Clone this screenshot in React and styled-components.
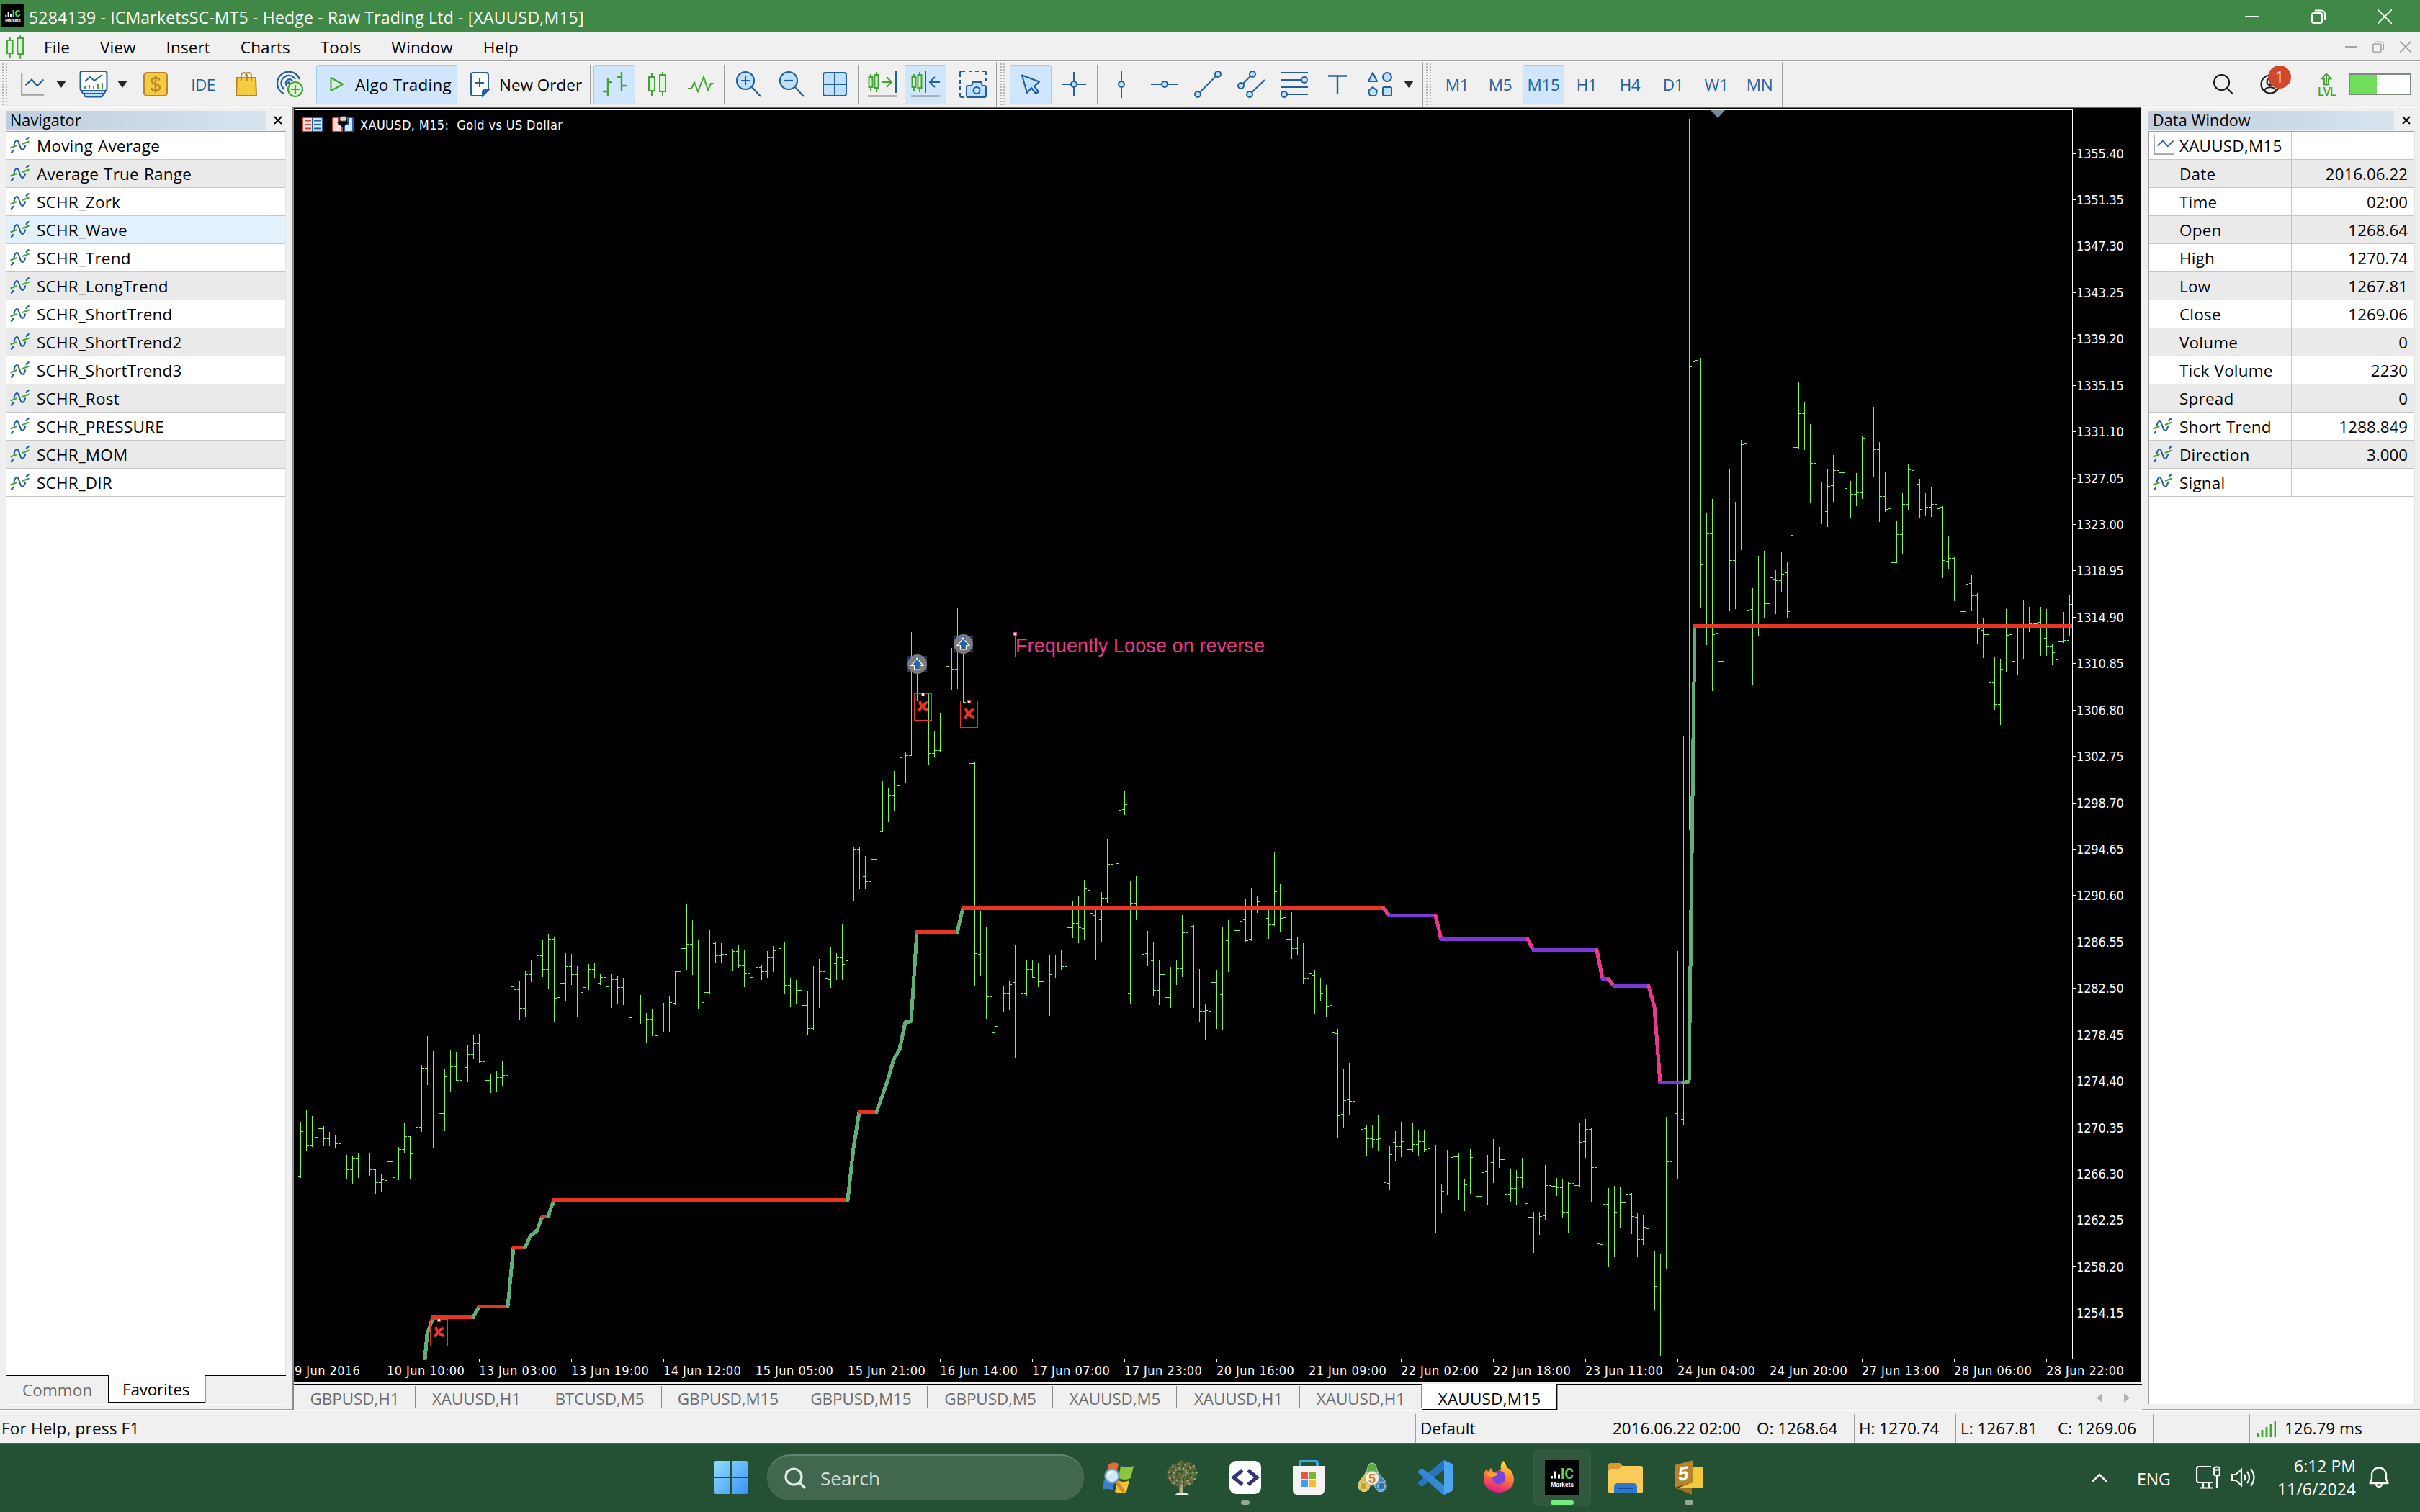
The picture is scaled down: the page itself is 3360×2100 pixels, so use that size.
import React from "react";
import styled, { createGlobalStyle, css } from "styled-components";

const UI = `"Open Sans", "Noto Sans", sans-serif`;
const CHART = `"DejaVu Sans Condensed", "DejaVu Sans", sans-serif`;
const BLUE = "#225f9c";
const SKY = "#bfe1fb";
const GREEN = "#44a336";
const MINT = "#daf6d4";

const GlobalStyle = createGlobalStyle`
  * { box-sizing: border-box; }
  body { margin: 0; background: #f0f0f0; }
`;

/* ---------- window frame ---------- */
const Desktop = styled.div`
  width: 3360px;
  height: 2100px;
  overflow: hidden;
  display: flex;
  flex-direction: column;
  background: #f0f0f0;
  color: #000;
  font-family: ${UI};
  font-size: 22.5px;
  letter-spacing: 0.1px;
  line-height: 30px;
  white-space: pre;
`;
const TitleBar = styled.header`
  height: 45px;
  flex: none;
  display: flex;
  align-items: center;
  padding: 0 39px 0 2px;
  background: #3f8846;
  color: #fff;
`;
const AppBadge = styled.svg`
  width: 32px;
  height: 32px;
  margin-top: -1px;
`;
const TitleText = styled.span`
  margin-left: 6px;
  padding-top: 2px;
  font-size: 23px;
  letter-spacing: 0.18px;
`;
const Push = styled.div`
  flex: 1;
`;
const WindowButtons = styled.div`
  display: flex;
  align-items: center;
  gap: ${(p) => p.$gap}px;
`;
const MenuBar = styled.nav`
  height: 41px;
  flex: none;
  display: flex;
  align-items: center;
  padding: 0 12px 0 9px;
  border-bottom: 1px solid #fff;
  box-shadow: inset 0 -1px 0 #a0a0a0;
`;
const MenuItems = styled.div`
  display: flex;
  gap: 42px;
  margin-left: 27px;
  padding-top: 1px;
`;

/* ---------- toolbar ---------- */
const Toolbar = styled.div`
  height: 63px;
  flex: none;
  display: flex;
  align-items: center;
  padding: 0 12px 0 0;
  border-bottom: 1px solid #a0a0a0;
`;
const Grip = styled.div`
  width: 8px;
  height: 60px;
  margin-left: ${(p) => p.$ml}px;
  background-image: radial-gradient(circle, #b4b4b4 1.1px, transparent 1.4px);
  background-size: 5px 4px;
`;
const Divider = styled.div`
  width: 1px;
  height: ${(p) => (p.$full ? 62 : 54)}px;
  margin-left: ${(p) => p.$ml}px;
  background: #a0a0a0;
`;
const Tool = styled.div`
  flex: none;
  display: flex;
  align-items: center;
  justify-content: ${(p) => (p.$start ? "flex-start" : "center")};
  width: ${(p) => p.$w}px;
  height: 55px;
  margin-left: ${(p) => p.$ml}px;
  padding-left: ${(p) => p.$start || 0}px;
  ${(p) =>
    p.$active &&
    css`
      background: #d0e6fd;
      border: 1px solid #99cdfb;
      border-radius: 3px;
    `}
  svg { flex: none; overflow: visible; }
`;
const ToolText = styled.span`
  margin-left: ${(p) => p.$ml || 0}px;
  padding-top: 2px;
  letter-spacing: ${(p) => p.$ls || 0}px;
  color: ${(p) => p.$c || "inherit"};
`;
const FrameGroup = styled.div`
  display: flex;
  margin-left: 6px;
`;
const Frame = styled(Tool)`
  color: ${BLUE};
  width: 58px;
  margin: 0 1px;
  padding-top: 2px;
  letter-spacing: -0.4px;
`;
const Battery = styled.div`
  width: 87px;
  height: 30px;
  margin-left: 17px;
  border: 2px solid #7d8a7d;
  background: linear-gradient(90deg, #70dd5c 37px, #fff 37px);
`;
const Account = styled.div`
  position: relative;
  width: 44px;
  height: 62px;
  margin-left: 37px;
  display: flex;
  align-items: center;
`;
const CountBadge = styled.div`
  position: absolute;
  left: 11px;
  top: 5px;
  width: 32px;
  height: 32px;
  border-radius: 50%;
  background: #d0492e;
  color: #fff;
  font-size: 21px;
  line-height: 33px;
  text-align: center;
`;
const Level = styled.div`
  width: 28px;
  margin-left: 34px;
  display: flex;
  flex-direction: column;
  align-items: center;
  color: ${GREEN};
  font-size: 16.5px;
  font-weight: 600;
  line-height: 16px;
  padding-top: 1px;
  letter-spacing: -1.2px;
`;

/* ---------- docked panels ---------- */
const Workspace = styled.main`
  height: 1810px;
  flex: none;
  display: flex;
`;
const Dock = styled.aside`
  width: ${(p) => p.$w}px;
  flex: none;
  display: flex;
  flex-direction: column;
  padding: ${(p) => p.$pad};
  border-bottom: 2px solid #a0a0a0;
  border-top: 1px solid #fff;
`;
const DockHeader = styled.div`
  display: flex;
  align-items: center;
  height: 26px;
  margin-bottom: 2px;
`;
const DockTitle = styled.div`
  width: ${(p) => p.$w}px;
  height: 26px;
  padding-left: 6px;
  background: linear-gradient(90deg, #bfcddd, #d7e4f0);
  font-size: 21.6px;
  line-height: 25px;
`;
const DockClose = styled.svg`
  width: 12px;
  height: 12px;
  margin-left: 11px;
`;
const List = styled.div`
  flex: 1;
  background: #fff;
  border-left: 1px solid #a0a0a0;
  border-top: 1px solid #a0a0a0;
  border-right: 1px solid #e3e3e3;
`;
const Row = styled.div`
  height: 39px;
  display: flex;
  align-items: stretch;
  border-bottom: 1px solid #c6c6c6;
  background: ${(p) => (p.$selected ? "#e3f1fc" : p.$shade ? "#eaeaea" : "#fff")};
`;
const RowName = styled.div`
  display: flex;
  align-items: center;
  width: ${(p) => (p.$w ? `${p.$w}px` : "auto")};
  padding: 2px 0 0 5px;
  border-right: ${(p) => (p.$w ? "1px solid #c6c6c6" : "none")};
  letter-spacing: 0.2px;
  word-spacing: 1px;
`;
const IconCell = styled.span`
  width: ${(p) => p.$w}px;
  flex: none;
  display: flex;
  padding-bottom: 4px;
`;
const RowValue = styled.div`
  flex: 1;
  padding: 5px 9px 0 0;
  text-align: right;
  font-size: 22.2px;
`;
const NavTabs = styled.div`
  height: 41px;
  display: flex;
  border-left: 1px solid #a0a0a0;
  border-bottom: 1px solid #fff;
`;
const NavTab = styled.div`
  width: ${(p) => p.$w}px;
  height: ${(p) => (p.$active ? 38 : 40)}px;
  padding-left: ${(p) => p.$pl}px;
  line-height: 40px;
  letter-spacing: ${(p) => (p.$active ? -0.2 : 0.1)}px;
  color: ${(p) => (p.$active ? "#000" : "#6d6d6d")};
  ${(p) =>
    p.$active
      ? css`
          background: #fff;
          border: solid #000;
          border-width: 0 1px 1px;
          box-shadow: 1px 1px 0 #9a9a9a;
        `
      : css`
          border-top: 1px solid #000;
        `}
`;

/* ---------- chart column ---------- */
const Center = styled.section`
  width: 2569px;
  flex: none;
  display: flex;
  flex-direction: column;
  border-left: 3px solid #8a8a8a;
  border-bottom: 1px solid #dcdcdc;
`;
const Chart = styled.svg`
  display: block;
  width: 2565px;
  height: 1771px;
  flex: none;
  background: #000;
  border-top: 1px solid #696969;
`;
const ChartTabs = styled.div`
  height: 36px;
  display: flex;
  align-items: stretch;
  margin-top: 2px;
  border-top: 1px solid #000;
  padding-right: 17px;
`;
const ChartTab = styled.div`
  width: ${(p) => p.$w}px;
  flex: none;
  text-align: center;
  line-height: 40px;
  color: #6d6d6d;
  letter-spacing: -0.1px;
  background-image: linear-gradient(#8c8c8c, #8c8c8c);
  background-size: 1px 31px;
  background-position: right 2px;
  background-repeat: no-repeat;
  ${(p) =>
    p.$active &&
    css`
      height: 36px;
      margin-top: -1px;
      line-height: 42px;
      letter-spacing: 0.2px;
      background: #fff;
      color: #000;
      border: 1px solid #000;
      border-top: none;
      box-shadow: 1px 1px 0 #9a9a9a;
    `}
`;
const TabArrows = styled.div`
  display: flex;
  align-items: center;
  gap: 30px;
  padding-top: 2px;
`;

/* ---------- status bar ---------- */
const StatusBar = styled.footer`
  height: 45px;
  flex: none;
  display: flex;
  align-items: center;
  border-top: 1px solid #fff;
  padding-left: 2px;
`;
const StatusCell = styled.div`
  width: ${(p) => p.$w}px;
  height: 40px;
  flex: none;
  display: flex;
  align-items: center;
  gap: 12px;
  margin-top: 4px;
  padding-left: ${(p) => (p.$first ? 0 : 6)}px;
  border-left: ${(p) => (p.$first ? "none" : "1px solid #a0a0a0")};
  letter-spacing: ${(p) => p.$ls || 0}px;
`;

/* ---------- taskbar ---------- */
const Taskbar = styled.div`
  height: 96px;
  flex: none;
  display: flex;
  padding: 6px 43px 8px 992px;
  align-items: center;
  background: #245033;
  border-top: 2px solid #3f6850;
  color: #fff;
`;
const SearchBox = styled.div`
  width: 440px;
  height: 64px;
  margin: 0 4px 0 27px;
  padding-left: 23px;
  display: flex;
  align-items: center;
  gap: 20px;
  border-radius: 32px;
  background: #41674f;
  border: 1px solid #4e735b;
  border-top: 2px solid #64836f;
  color: #d5dfd8;
  font-size: 26px;
`;
const TaskSlot = styled.div`
  width: 80px;
  height: 80px;
  flex: none;
  margin: 0 4px;
  border-radius: 8px;
  display: flex;
  flex-direction: column;
  align-items: center;
  padding-top: 15px;
  border: 1px solid ${(p) => (p.$active ? "#386046" : "transparent")};
  background: ${(p) => (p.$active ? "#2f583e" : "transparent")};
`;
const TaskMark = styled.div`
  width: ${(p) => (p.$active ? 32 : 12)}px;
  height: 6px;
  margin-top: 8px;
  border-radius: 3px;
  background: ${(p) => (p.$active ? "#77e97f" : "#93a99b")};
`;
const Tray = styled.div`
  display: flex;
  align-items: center;
  svg { flex: none; }
`;
const Language = styled.span`
  margin: 4px 36px 0 41px;
  font-size: 23px;
  width: 46px;
  letter-spacing: -0.1px;
`;
const Clock = styled.div`
  width: 140px;
  text-align: right;
  font-size: 23px;
  line-height: 32px;
  letter-spacing: 0;
`;
const Speaker = styled.svg`
  margin-left: 15px;
`;
const Bell = styled.svg`
  margin-left: 18px;
`;

/* ---------- small icons ---------- */
const Svg = ({ w, h, children, sw = 2, c = BLUE, fill = "none" }) => (
  <svg width={w} height={h} viewBox={`0 0 ${w} ${h}`} fill={fill} stroke={c} strokeWidth={sw}>
    {children}
  </svg>
);
const Caret = () => (
  <svg width="14" height="10" viewBox="0 0 14 10"><path d="M0 0h14L7 10z" fill="#262626" /></svg>
);
const Candles = ({ w = 26, h = 34 }) => (
  <svg width={w} height={h} viewBox="0 0 26 34" stroke={GREEN} strokeWidth="2" fill={MINT}>
    <path d="M5 2v31M20 0v34" />
    <rect x="1" y="7" width="8" height="19" />
    <rect x="16" y="4" width="8" height="23" />
  </svg>
);
const IndicatorIcon = () => (
  <Svg w={27} h={23} sw={2.1}>
    <path d="M0.500 15.500l9-3.500M17 10l9.500-3.500" stroke={GREEN} />
    <path d="M1 22q2.500-.5 3.500-4M5.500 12C7 3.500 10.500 3.500 12 8l2.500 7c1.500 4.500 5 4 6.800-3.500M22.500 5q.5-3 4-4.300" />
  </Svg>
);
const LineChartIcon = ({ s = 34 }) => (
  <svg width={s} height={s * 0.9} viewBox="0 0 34 32" fill="none" strokeWidth="2.2">
    <path d="M1.500 0v31H34" stroke="#a0a0a0" />
    <path d="M7 17l9-8 8 9 9-9" stroke={BLUE} />
  </svg>
);
const Lens = ({ plus }) => (
  <Svg w={36} h={36} sw={2.2}>
    <circle cx="14" cy="13" r="12" fill={SKY} />
    <path d={plus ? "M8 13h12M14 7v12" : "M8 13h12"} />
    <path d="M23 22l12 13" />
  </Svg>
);
const ShiftIcon = ({ back }) => (
  <svg width="40" height="36" viewBox="0 0 40 36" fill={MINT} strokeWidth="2" stroke={GREEN}>
    <path d="M4 4v24M12 1v28" />
    <rect x="1.500" y="8" width="5" height="14" />
    <rect x="9.500" y="5" width="5" height="18" />
    {back ? (
      <>
        <path d="M20 0v30" stroke={BLUE} />
        <path d="M40 15H27M33 8l-7 7 7 7" fill="none" stroke={BLUE} />
      </>
    ) : (
      <>
        <path d="M19 15h13M26 8l7 7-7 7" fill="none" />
        <path d="M39 0v30" stroke={BLUE} />
      </>
    )}
    <path d="M0 34.500h40" stroke="#a0a0a0" strokeWidth="2.500" />
  </svg>
);
const Dot = ({ x, y, r = 4 }) => <circle cx={x} cy={y} r={r} fill={SKY} />;
const CloseX = () => (
  <DockClose viewBox="0 0 12 12"><path d="M1 1l10 10M11 1L1 11" stroke="#000" strokeWidth="2" /></DockClose>
);
const RestoreIcon = ({ s, c }) => (
  <svg width={s} height={s} viewBox="0 0 20 20" fill="none" stroke={c} strokeWidth="2">
    <rect x="1" y="5" width="14" height="14" rx="2.500" />
    <path d="M5 1.500h9a5 5 0 015 5V15" />
  </svg>
);

const Logo = ({ size }) => (
  <svg width={size} height={size} viewBox="0 0 48 48">
    <rect width="48" height="48" fill="#000" />
    <path d="M8 25.500v-3.500h3v3.500zM13 25.500v-10h3v10zM18 25.500v-6h3v6z" fill="#fff" />
    <text x="22" y="25.500" fontFamily="Roboto, sans-serif" fontWeight="700" fontSize="20" fill="#62d84e" textLength="18" lengthAdjust="spacingAndGlyphs">IC</text>
    <text x="8" y="36.500" fontFamily="Roboto, sans-serif" fontWeight="700" fontSize="9" fill="#fff" textLength="32" lengthAdjust="spacingAndGlyphs">Markets</text>
  </svg>
);

/* ---------- price series: [high, low, close, open?] ---------- */
const SESSIONS = [
  { first: 1, top: 1150, unit: 2.0907, bars: [
    [853,1015,881,1011],[820,935,919,877],[836,925,899],[866,903,872,896],[866,923,902],[882,923,898],[891,927,916,914],[903,1022,1018],[949,1019,990],[953,1033,959],
    [943,1014,980],[945,1001,952,975],[945,1010,992],[989,1060,1029],[1006,1054,1021],[884,1042,968,1023],[898,1033,1015],[926,1021,933,1018],[857,943,895],[895,1018,944],
    [857,958,868,942],[688,881,699],[605,745,653],[648,928,853],[794,858,827],[700,879,721],[644,766,693,719],[650,733,731],[698,765,756],[631,736,657,695],
    [602,670,626],[598,679,678],[675,801,732],[715,767,743],[707,765,724],[677,747,718],[433,750,457],[406,531,469,459],[445,557,522],[416,547,424],
    [382,445,415],[360,433,371],[324,431,409],[307,465,323],[317,560,494],[397,627,450,492],[364,500,402],[366,453,425],[401,546,473],[429,506,462,476],
    [395,469,410,467],[391,432,428],[424,454,433,450],[429,498,459],[424,520,439,457],[431,510,461],[437,512,488],[487,569,549],[517,567,563,547],[485,567,557],
    [537,620,554],[527,603,601],[523,669,547,603],[508,591,578],[489,590,505],[417,512,417,507],[330,470,350],[220,410,336],[268,424,348],[324,523,503],
    [449,537,476,505],[297,479,338],[331,391,370,335],[335,389,365],[335,380,367],[351,412,358,382],[341,406,398],[355,460,422],[406,469,432],[378,469,404,434],
    [397,440,417],[358,435,375],[343,416,356],[312,395,349,354],[330,481,455,347],[435,518,480],[441,510,471],[462,525,515],[475,598,582],[401,583,444],
    [381,521,417],[395,494,437],[345,462,391,440],[364,440,375,394],[278,439,396] ] },
  { first: 96, top: 800, unit: 2.24, bars: [
    [771,1197,963,1196],[842,1008,850],[844,972,955],[871,972,949,934],[856,956,881],[737,887,796],[638,795,740,792],[659,762,682],[607,730,651],[551,672,565,649],
    [547,640,557,563],[175,558,258],[270,388,371],[323,418,411],[366,585,552],[482,562,541],[426,547,507,543],[240,511,281],[224,354,288,283],[99,349,200],
    [200,394,391],[376,679,583],[578,1275,1173],[1042,1243,1146,1175],[1093,1375,1309],[1268,1465,1421],[1304,1445,1305,1401],[1275,1353,1296],[1259,1348,1269],[1147,1496,1417,1264],
    [1288,1434,1298],[1194,1306,1222],[1196,1250,1248,1224],[1205,1277,1262,1244],[1214,1393,1363,1260],[1178,1366,1238],[1180,1250,1193,1235],[1163,1223,1215],[1077,1218,1094],[1012,1124,1079],
    [995,1140,1094],[945,1131,973,1096],[795,1066,1049,976],[1038,1194,1067,1056],[983,1136,1002,1069],[818,1015,895],[842,914,899,897],[674,894,727,893],[670,741,711,725],[950,1331,1016,1296],
    [932,1068,1038],[972,1201,1175],[1104,1210,1195,1173],[1138,1306,1289,1197],[1194,1333,1238],[1236,1357,1311],[1216,1342,1249],[1196,1270,1220],[1055,1245,1108],[1060,1140,1090],
    [1086,1342,1249,1088],[1223,1384,1352,1251],[1331,1440,1350],[1207,1357,1264,1354],[1225,1407,1305],[1091,1411,1137,1302],[1071,1230,1193,1134],[1086,1207,1101],[999,1172,1072],[1006,1136,1134,1069],
    [972,1133,1011,1130],[997,1046,1013],[1008,1084,1067,1020],[1036,1127,1085,1063],[860,1086,982],[959,1104,1063,978],[1044,1163,1130,1061],[1046,1189,1159,1128],[1124,1178,1147,1157],[1142,1268,1252],
    [1194,1284,1237],[1225,1360,1291,1240],[1250,1319,1298],[1272,1371,1338,1300],[1331,1429,1421,1336] ] },
  { first: 181, top: 1150, unit: 2.0907, bars: [
    [583,899,835,595],[700,870,791,831],[684,832,793,789],[746,1031,898],[826,907,874],[863,951,902,872],[863,926,904],[834,937,902],[866,1062,1028,900],[922,1050,948,1030],
    [880,964,925,912],[855,953,910],[909,1006,933,913],[857,939,917],[876,951,910],[878,939,933],[903,970,929,931],[920,1173,1099],[1033,1116,1053],[935,1064,958,1055],
    [926,993,954,956],[945,1077,1042],[1020,1110,1034],[932,1060,956,1032],[922,1089,1069,952],[922,1067,1000],[949,1091,974,998],[903,1029,975,971],[926,985,961],[899,1089,1065],
    [989,1085,1046],[993,1091,1015],[960,1043,1009,1013],[1064,1137,1128,1090],[1116,1231,1122],[1114,1179,1126],[978,1137,1038,1124],[1014,1062,1040],[1016,1066,1044],[1020,1129,1117],
    [1027,1175,1031],[813,1060,1038,1030],[857,1041,912],[845,958,874,910],[870,1085,985],[983,1292,1206],[1089,1250,1092,1208],[1045,1273,1227],[1039,1244,1117],[1041,1158,1087,1115],
    [970,1133,1065],[1060,1177,1126],[1119,1244,1193,1128],[1125,1208,1158],[1106,1290,1288,1163],[1227,1399,1329],[1238,1530,1257,1504],[840,1277,967],[732,1075,823],[358,1016,839,827],
    [-268,861,2,844],[-2059,4,-1341,3] ] },
  { first: 243, top: 150, unit: 1.6505, bars: [
    [401,1162,577,581],[573,1145,1046,580],[929,1230,974,1044],[896,1335,1206],[1045,1287,1267,1203],[1086,1381,1141],[827,1150,1037],[903,1147,916],[761,1012,771],[721,1233,1151,768],
    [1101,1322,1141,1149],[1027,1210,1033,1140],[1015,1167,1136],[1035,1178,1076],[1058,1159,1083,1079],[1018,1108,1068],[1041,1167,1154,1064],[769,985,778,979],[627,779,700],[673,782,722,699],
    [724,904,814],[797,888,856],[856,952,927],[829,959,867,925],[796,901,830,865],[819,881,835],[830,949,871],[855,937,885,874],[837,911,881],[753,895,758],
    [682,815,692,756],[685,845,783],[766,947,889],[834,925,920],[895,1093,1042,918],[947,1041,977],[883,1022,908],[817,921,829],[766,891,863,831],[850,939,920,861],
    [883,935,915,910],[870,936,908],[875,936,918],[913,1076,1036,915],[980,1055,1031,1038],[1028,1129,1093],[1060,1205,1154],[1058,1198,1091],[1070,1152,1117,1089],[1112,1226,1192],
    [1169,1259,1206,1197],[1198,1317,1316],[1258,1378,1367],[1263,1413,1286],[1149,1291,1208,1288],[1043,1302,1267,1206],[1190,1297,1223,1264],[1129,1261,1164],[1144,1200,1180],[1136,1182,1180],
    [1144,1254,1217,1178],[1149,1254,1233,1214],[1230,1276,1248],[1190,1274,1222,1263],[1155,1225,1220],[1115,1208,1138] ] },
];
const barPath = "M410 1633.5h3" + SESSIONS.map(({ first, top, unit, bars }) => {
  const y = (v) => Math.round(top + v / unit) + 0.5;
  return bars
    .map(([h, l, c, o], i) => {
      const x = 409.5 + (first + i) * 8;
      const open = o ?? (i ? bars[i - 1][2] : c);
      return `M${x} ${y(h) - 0.5}V${y(l) + 0.5}M${x - 3.5} ${y(open)}h3M${x} ${y(c)}h3.5`;
    })
    .join("");
}).join("");

const RED = "#ea3323";
const LEAF = "#5fb077";
const PINK = "#ea3890";
const VIOLET = "#7a38d6";
const TREND = [
  [LEAF, "590,1887 593,1853 601,1829.500"], [RED, "601,1829.500 657,1829.500"], [LEAF, "657,1829.500 665,1814.500"], [RED, "665,1814.500 705,1814.500"],
  [LEAF, "705,1814.500 713,1732.500"], [RED, "713,1732.500 729,1732.500"], [LEAF, "729,1732.500 737,1715.500 745,1710.500 753,1689.500"],
  [RED, "753,1689.500 761,1689.500"], [LEAF, "761,1689.500 769,1666.500"], [RED, "769,1666.500 1177,1666.500"],
  [LEAF, "1177,1666.500 1185,1595 1193,1544.500"], [RED, "1193,1544.500 1217,1544.500"],
  [LEAF, "1217,1544.500 1225,1522 1233,1499 1241,1471 1249,1457.500 1257,1420 1265,1418.500 1273,1294.500"],
  [RED, "1273,1294.500 1329,1294.500"], [LEAF, "1329,1294.500 1337,1261.500"], [RED, "1337,1261.500 1921,1261.500"],
  [PINK, "1921,1261.500 1929,1271.500"], [VIOLET, "1929,1271.500 1993,1271.500"], [PINK, "1993,1271.500 2001,1304.500"],
  [VIOLET, "2001,1304.500 2121,1304.500"], [PINK, "2121,1304.500 2129,1319.500"], [VIOLET, "2129,1319.500 2217,1319.500"],
  [PINK, "2217,1319.500 2225,1359.500"], [VIOLET, "2225,1359.500 2233,1359.500"], [PINK, "2233,1359.500 2241,1369.500"],
  [VIOLET, "2241,1369.500 2289,1369.500"], [PINK, "2289,1369.500 2297,1399 2305,1503.500"], [VIOLET, "2305,1503.500 2337,1503.500"],
  [LEAF, "2337,1503.500 2345,1502 2353,869.500"], [RED, "2353,869.500 2875,869.500"],
];
const PRICES = Array.from({ length: 26 }, (_, i) => (1355.4 - i * 4.05).toFixed(2));
const DATES = ["9 Jun 2016", "10 Jun 10:00", "13 Jun 03:00", "13 Jun 19:00", "14 Jun 12:00", "15 Jun 05:00", "15 Jun 21:00", "16 Jun 14:00", "17 Jun 07:00", "17 Jun 23:00", "20 Jun 16:00", "21 Jun 09:00", "22 Jun 02:00", "22 Jun 18:00", "23 Jun 11:00", "24 Jun 04:00", "24 Jun 20:00", "27 Jun 13:00", "28 Jun 06:00", "28 Jun 22:00"];

const BuyMark = ({ x, y }) => (
  <g transform={`translate(${x} ${y})`}>
    <circle r="13.500" fill="#857b72" />
    <rect x="-12.500" y="-10.500" width="25" height="21" fill="none" stroke="#4478bd" />
    <path d="M0-7.500L8.500 2H4v5.500h-8V2h-4.500z" fill="#2361ab" stroke="#fff" strokeWidth="1.200" />
    <rect x="-2" y="-9.500" width="4" height="4" fill="#fff" stroke="#2361ab" />
  </g>
);
const StopMark = ({ x, y, h = 37 }) => (
  <g transform={`translate(${x} ${y})`}>
    <rect x="-11.500" y="0.500" width="24" height={h} fill="none" stroke={RED} />
    <path d="M-3.500 13q2 7 9 9.500M5 13q-5 4-9.500 10" stroke={RED} strokeWidth="4" fill="none" strokeLinecap="square" />
    <rect x="-1.500" y="-0.500" width="4" height="4" fill="#fff" stroke={RED} />
  </g>
);

const PriceChart = () => (
  <Chart viewBox="408 150 2565 1770">
    <g fill="none" stroke="#fff" shapeRendering="crispEdges">
      <path d="M409.500 1891V152.500H2877.500V1887.500H409.500" />
      {PRICES.map((p, i) => <path key={p} d={`M2878 ${Math.round(212.5 + i * 64.43) + 0.5}h4`} />)}
      {DATES.map((d, i) => <path key={d} d={`M${409.5 + i * 128} 1888v4`} />)}
    </g>
    <path d={barPath} stroke="#75fb4c" fill="none" shapeRendering="crispEdges" />
    <g fill="none" strokeWidth="5" strokeLinecap="round" strokeLinejoin="round" shapeRendering="crispEdges">
      {TREND.map(([c, pts]) => <polyline key={pts} points={pts} stroke={c} />)}
    </g>
    <path d="M2375 153h20l-10 11z" fill="#778899" />
    <BuyMark x={1273.5} y={922.5} />
    <BuyMark x={1337.5} y={894.5} />
    <StopMark x={1281} y={963} />
    <StopMark x={1345} y={973} />
    <StopMark x={609} y={1832} />
    <rect x="1409.500" y="880.500" width="347" height="32" fill="none" stroke={PINK} />
    <rect x="1407.500" y="878.500" width="4" height="4" fill="#fff" stroke={PINK} />
    <text x="1410" y="906" fontFamily={`"Liberation Sans", Arial, sans-serif`} fontSize="27" fill={PINK} textLength="346">Frequently Loose on reverse</text>

    <g transform="translate(419 162)">
      <rect x="1" y="1" width="28" height="20" rx="2" fill="#fbdcd8" stroke="#cc4433" strokeWidth="2" />
      <path d="M15 1h12a2 2 0 012 2v16a2 2 0 01-2 2H15z" fill="#c9e6fc" stroke={BLUE} strokeWidth="2" />
      <path d="M4 5.500h9M4 11h9M4 16.500h9" stroke="#cc4433" strokeWidth="2" />
      <path d="M17 5.500h9M17 11h9M17 16.500h9" stroke={BLUE} strokeWidth="2" />
    </g>
    <g transform="translate(461 162)">
      <path d="M3 1h6v9h5v11H3a2 2 0 01-2-2V3a2 2 0 012-2z" fill="#fbdcd8" stroke="#cc4433" strokeWidth="2" />
      <path d="M27 1h-5v9h-5v11h10a2 2 0 002-2V3a2 2 0 00-2-2z" fill="#c9e6fc" stroke={BLUE} strokeWidth="2" />
      <path d="M7 8h16l-8 7z" fill="#000" />
      <rect x="11" y="0" width="9" height="6" rx="2" fill="#d8d8d8" stroke="#777" />
    </g>
    <g fill="#fff" fontFamily={CHART} fontSize="18">
      <text x="500" y="180" textLength="281" xmlSpace="preserve">XAUUSD, M15:{"\u00a0"} Gold vs US Dollar</text>
      {PRICES.map((p, i) => <text key={p} x="2883" y={219.5 + i * 64.43} textLength="66">{p}</text>)}
      {DATES.map((d, i) => <text key={d} x={409 + i * 128} y="1910" textLength={i ? 108 : 91}>{d}</text>)}
    </g>
  </Chart>
);

/* ---------- data ---------- */
const INDICATORS = ["Moving Average", "Average True Range", "SCHR_Zork", "SCHR_Wave", "SCHR_Trend", "SCHR_LongTrend", "SCHR_ShortTrend", "SCHR_ShortTrend2", "SCHR_ShortTrend3", "SCHR_Rost", "SCHR_PRESSURE", "SCHR_MOM", "SCHR_DIR"];
const DATA = [["XAUUSD,M15", "", "chart"], ["Date", "2016.06.22"], ["Time", "02:00"], ["Open", "1268.64"], ["High", "1270.74"], ["Low", "1267.81"], ["Close", "1269.06"], ["Volume", "0"], ["Tick Volume", "2230"], ["Spread", "0"], ["Short Trend", "1288.849", "wave"], ["Direction", "3.000", "wave"], ["Signal", "", "wave"]];
const TABS = [["GBPUSD,H1", 169], ["XAUUSD,H1", 169], ["BTCUSD,M5", 173], ["GBPUSD,M15", 184], ["GBPUSD,M15", 185], ["GBPUSD,M5", 174], ["XAUUSD,M5", 172], ["XAUUSD,H1", 171], ["XAUUSD,H1", 169], ["XAUUSD,M15", 188, true]];

const ToolStrip = () => (
  <Toolbar>
    <Grip $ml={2} />
    <Tool $ml={18} $w={34}><LineChartIcon /></Tool>
    <Tool $ml={16} $w={14}><Caret /></Tool>
    <Tool $ml={18} $w={40}>
      <Svg w={40} h={38}>
        <rect x="1.500" y="1" width="37" height="27" rx="3" fill="#fff" />
        <path d="M4 28.500c0 3 1 3.500 3 3.500h26c2 0 3-1 3-3.500M7 32.500c0 3 1 4 3 4h20c2 0 3-1 3-4" fill={SKY} />
        <path d="M8 15l7-6 6 5 11-8" />
        <path d="M8 25v-3M14 25v-5M20 25v-3M26 25v-6M32 25v-8" stroke={GREEN} />
      </Svg>
    </Tool>
    <Tool $ml={13} $w={14}><Caret /></Tool>
    <Tool $ml={22} $w={34}>
      <Svg w={34} h={34} c="#bb8424">
        <rect x="1" y="1" width="32" height="32" rx="4" fill="#f5cb42" />
        <path d="M22.500 11.500c-1-2.500-3-3.500-5.500-3.500-3 0-5.500 1.500-5.500 4.300 0 6 11.500 3 11.500 9.200 0 3-2.800 4.500-6 4.500-2.800 0-5-1-6-4M17 5v24" strokeWidth="2.400" />
      </Svg>
    </Tool>
    <Divider $ml={15} />
    <Tool $ml={15} $w={36}><ToolText $ls={-0.6} $c={BLUE}>IDE</ToolText></Tool>
    <Tool $ml={27} $w={30}>
      <Svg w={30} h={34} c="#bb8424">
        <path d="M2 8h26l1 25H1z" fill="#f5cb42" />
        <path d="M8 13V5a4 4 0 018 0v8M14 5a4 4 0 018 0v8" strokeWidth="1.800" />
      </Svg>
    </Tool>
    <Tool $ml={28} $w={36}>
      <Svg w={36} h={36} sw={2.2}>
        <path d="M9 31a16 16 0 1122-20M10 25a10.500 10.500 0 1115-14M13 20a5 5 0 118-7" />
        <circle cx="16" cy="16" r="2" fill={BLUE} stroke="none" />
        <circle cx="25" cy="25" r="10" fill={MINT} stroke={GREEN} />
        <path d="M25 19v12M19 25h12" stroke={GREEN} />
      </Svg>
    </Tool>
    <Divider $ml={13} />
    <Tool $ml={4} $w={196} $active $start={18}>
      <Svg w={20} h={22} c={GREEN}><path d="M1.500 2v18L18 11z" fill={MINT} strokeLinejoin="round" /></Svg>
      <ToolText $ml={15} $ls={0.25}>Algo Trading</ToolText>
    </Tool>
    <Tool $ml={18} $w={155} $start={0.01}>
      <Svg w={26} h={34}>
        <path d="M4 1h18a3 3 0 013 3v21l-8 8H4a3 3 0 01-3-3V4a3 3 0 013-3z" fill="#fff" />
        <path d="M17 33v-5a3 3 0 013-3h5z" fill={BLUE} />
        <path d="M13 9v12M7 15h12" />
      </Svg>
      <ToolText $ml={14}>New Order</ToolText>
    </Tool>
    <Divider $ml={11} />
    <Tool $ml={4} $w={58} $active>
      <Svg w={34} h={34} c={GREEN} sw={2.4}><path d="M8 8v26M8 14h6M1 27h7M27 0v26M20 7h7M27 19h7" /></Svg>
    </Tool>
    <Tool $ml={18} $w={26}><Candles /></Tool>
    <Tool $ml={29} $w={36}>
      <Svg w={36} h={22} c={GREEN} sw={2}><path d="M0 17h5l4-9 5 13 8-20 6 18 4-9h4" /></Svg>
    </Tool>
    <Divider $ml={14} />
    <Tool $ml={15} $w={36}><Lens plus /></Tool>
    <Tool $ml={24} $w={36}><Lens /></Tool>
    <Tool $ml={25} $w={34}>
      <Svg w={34} h={34}><rect x="1" y="1" width="32" height="32" rx="3" fill={SKY} /><path d="M17 1v32M1 17h32" /></Svg>
    </Tool>
    <Divider $ml={15} />
    <Tool $ml={13} $w={40}><ShiftIcon /></Tool>
    <Tool $ml={11} $w={58} $active><ShiftIcon back /></Tool>
    <Divider $ml={3} />
    <Tool $ml={14} $w={38}>
      <Svg w={38} h={38}>
        <path d="M1 9V3a2 2 0 012-2h5M13 1h5M22 1h5M31 1h4a2 2 0 012 2v3M37 10v5M1 13v5M1 22v5M1 31v4a2 2 0 002 2h3" />
        <path d="M12 21h5l2-5h11l2 5h3a2 2 0 012 2v12a2 2 0 01-2 2H12a2 2 0 01-2-2V23a2 2 0 012-2z" fill={SKY} />
        <circle cx="24" cy="27.500" r="4.500" />
      </Svg>
    </Tool>
    <Divider $ml={13} $full />
    <Grip $ml={3} />
    <Tool $ml={7} $w={58} $active>
      <Svg w={26} h={28} sw={2.2}><path d="M1 1.500l24 9-7 6.500 6 7.500-4 2.500-6-8-6 7z" fill={SKY} strokeLinejoin="round" /></Svg>
    </Tool>
    <Tool $ml={14} $w={34}><Svg w={34} h={34}><path d="M17 0v34M0 17h34" /><Dot x={17} y={17} /></Svg></Tool>
    <Divider $ml={15} />
    <Tool $ml={27} $w={12}><Svg w={12} h={38}><path d="M6 0v38" /><Dot x={6} y={19} /></Svg></Tool>
    <Tool $ml={35} $w={38}><Svg w={38} h={12}><path d="M0 6h38" /><Dot x={19} y={6} /></Svg></Tool>
    <Tool $ml={22} $w={38}><Svg w={38} h={38}><path d="M5 33L33 5" /><Dot x={5} y={33} /><Dot x={33} y={5} /></Svg></Tool>
    <Tool $ml={22} $w={38}>
      <Svg w={38} h={38}><path d="M5 21L21 5M17 33l21-20" /><Dot x={5} y={21} /><Dot x={21} y={5} /><Dot x={17} y={33} /></Svg>
    </Tool>
    <Tool $ml={22} $w={38}>
      <Svg w={38} h={38}><path d="M0 3h38M0 13h30M0 23h38M8 33h30" /><Dot x={33} y={13} /><Dot x={5} y={33} /></Svg>
    </Tool>
    <Tool $ml={28} $w={26}><Svg w={26} h={26} sw={2.4}><path d="M0 1.500h26M13 1.500V26" /></Svg></Tool>
    <Tool $ml={29} $w={34}>
      <Svg w={34} h={34}>
        <path d="M7 1l6 12H1zM7 21l6 5-2 7H3l-2-7z" fill={SKY} strokeLinejoin="round" />
        <circle cx="27" cy="7" r="6" fill={SKY} />
        <rect x="21" y="21" width="12" height="12" rx="1.500" fill={SKY} />
      </Svg>
    </Tool>
    <Tool $ml={16} $w={14}><Caret /></Tool>
    <Divider $ml={12} $full />
    <Grip $ml={3} />
    <FrameGroup>
      {["M1", "M5", "M15", "H1", "H4", "D1", "W1", "MN"].map((t) => <Frame key={t} $active={t === "M15"}>{t}</Frame>)}
    </FrameGroup>
    <Divider $ml={1} $full />
    <Push />
    <Svg w={28} h={28} c="#1c1c1c" sw={2.2}><circle cx="11.500" cy="11.500" r="10.500" /><path d="M19 19.500l8 8" /></Svg>
    <Account>
      <Svg w={28} h={28} c="#1c1c1c" sw={2.2}>
        <circle cx="14" cy="14" r="12.500" /><circle cx="14" cy="10.500" r="4.500" /><path d="M6 23.500c1.500-7 14.500-7 16 0" />
      </Svg>
      <CountBadge>1</CountBadge>
    </Account>
    <Level>
      <Svg w={16} h={18} c={GREEN} sw={2}><path d="M8 1.500l6.500 7H11v8H5v-8H1.500zM8 4v12" fill={MINT} /></Svg>
      LVL
    </Level>
    <Battery />
  </Toolbar>
);

const StoreIcon = () => (
  <svg width="48" height="48" viewBox="0 0 48 48">
    <path d="M12 12V4a3 3 0 013-3h18a3 3 0 013 3v8" fill="none" stroke="#3aa7ea" strokeWidth="4" />
    <path d="M2 8h44v34a6 6 0 01-6 6H8a6 6 0 01-6-6z" fill="#f3f3f3" />
    <path d="M14 17h9v9h-9z" fill="#e35b33" /><path d="M25 17h9v9h-9z" fill="#7cb13a" />
    <path d="M14 28h9v9h-9z" fill="#3aa0ec" /><path d="M25 28h9v9h-9z" fill="#f8bd2e" />
  </svg>
);
const TreeIcon = () => {
  const leaves = Array.from({ length: 130 }, (_, i) => {
    const a = i * 2.4;
    const r = Math.sqrt(i / 130);
    return [24 + Math.cos(a) * r * 21, 19 + Math.sin(a) * r * 17.5, i % 5];
  });
  return (
    <svg width="48" height="48" viewBox="0 0 48 48">
      <path d="M24 46V24M24 36l-11-7M24 35l12-8M22 46l-1-14" stroke="#b5a48c" strokeWidth="2.500" />
      {leaves.map(([x, y, k], i) => <circle key={i} cx={x} cy={y} r="1.700" fill={["#4f7a33", "#8a5a44", "#35582a", "#a79a86", "#5c7a3c"][k]} />)}
      <path d="M14 48h20l-5-3H19z" fill="#e9efe6" />
    </svg>
  );
};
const RegistryIcon = () => (
  <svg width="48" height="48" viewBox="0 0 48 48">
    <path d="M10 6q7-5 14-1l-4 18q-8-4-14 0z" fill="#e6692f" />
    <path d="M27 8q8 4 18 0l-4 17q-8 4-17 0z" fill="#8cc63e" />
    <path d="M4 27q8-4 15 0l-3 15q-7-4-14-1z" fill="#3c7fd0" />
    <path d="M23 28q8 4 16 0l-4 16q-8 4-16 0z" fill="#f6c431" />
    <path d="M21 30l9 12" stroke="#c98b3a" strokeWidth="5" strokeLinecap="round" />
    <circle cx="15" cy="22" r="9.500" fill="#cfe8f8" stroke="#6d9cc4" strokeWidth="2.500" />
    <path d="M10 20a6 6 0 016-4" stroke="#fff" strokeWidth="2.500" fill="none" strokeLinecap="round" />
  </svg>
);
const CodeIcon = () => (
  <svg width="48" height="48" viewBox="0 0 48 48">
    <rect x="2" y="1" width="44" height="46" rx="9" fill="#fff" />
    <path d="M20 14L8 24l12 10M28 14l12 10-12 10" fill="none" stroke="#343676" strokeWidth="5" />
  </svg>
);
const MetaIcon = () => (
  <svg width="48" height="48" viewBox="0 0 48 48" stroke="#e8efdf" strokeWidth="0.800">
    <path d="M24 4a6 6 0 016 6c0 4 6 10 6 18H12c0-8 6-14 6-18a6 6 0 016-6z" fill="#5cab4a" />
    <path d="M17 16c-2 6-12 10-12 20a8 8 0 0014 5l5-13z" fill="#e5bd35" />
    <path d="M31 16c2 6 13 10 13 20a8 8 0 01-14 5l-6-13z" fill="#3c8ac6" />
    <circle cx="12" cy="36" r="5" fill="#cf9f24" /><circle cx="37" cy="36" r="5" fill="#2d6fa8" />
    <circle cx="24" cy="25" r="9.500" fill="#f3f3ee" stroke="#b9b9ae" strokeWidth="1.500" />
    <text x="24" y="32" textAnchor="middle" fontFamily="Roboto, sans-serif" fontWeight="700" fontSize="19" fill="#d9782a" stroke="none">5</text>
  </svg>
);
const EditorIcon = () => (
  <svg width="48" height="48" viewBox="0 0 48 48">
    <path d="M36 13L7 36a3 3 0 01-3 0l-4-3.500v-2L34 .5l2-.5z" fill="#2a73bd" />
    <path d="M36 48V35L7 12a3 3 0 00-3 0l-4 3.500v2L34 47.500z" fill="#3387d4" />
    <path d="M36 0l11 5 1 2v34l-1 2-11 5z" fill="#4ea6ee" />
  </svg>
);
const FoxIcon = () => (
  <svg width="48" height="48" viewBox="0 0 48 48">
    <defs>
      <linearGradient id="fox" x1="0.700" y1="0" x2="0.400" y2="1"><stop offset="0" stopColor="#ffe14d" /><stop offset="0.450" stopColor="#ff8a2c" /><stop offset="1" stopColor="#e31587" /></linearGradient>
    </defs>
    <path d="M30 1c4 4 4 7 6 10l4 2c3 4 5 9 5 14A21 18 0 013 27c0-7 1-11 4-15l2 4 4-5 3 5 6 1c1-2 3-4 5-4-1-4 0-9 3-12z" fill="url(#fox)" />
    <circle cx="24" cy="24" r="9.500" fill="#7a44e0" /><path d="M8 18c6-2 11 0 14 0 0 4-4 4-6 6l-7-2z" fill="#ffa030" />
  </svg>
);
const FolderIcon = () => (
  <svg width="50" height="48" viewBox="0 0 50 48">
    <path d="M1 7a3 3 0 013-3h13l5 5-3 4H1z" fill="#d99a32" />
    <path d="M1 15l2-3h13l4-4h26a3 3 0 013 3v32a3 3 0 01-3 3H4a3 3 0 01-3-3z" fill="#fbcb5a" />
    <path d="M9 46V37a5 5 0 015-5h22a5 5 0 015 5v9z" fill="#2b78cf" /><path d="M15 39h20" stroke="#194f93" strokeWidth="2" />
  </svg>
);
const FiveIcon = () => (
  <svg width="40" height="48" viewBox="0 0 40 48">
    <path d="M24 10h15v29H4l20-8z" fill="#f2c83f" />
    <path d="M0 7l26-7v31L0 38z" fill="#b9832d" /><path d="M0 38l4 1h20v9z" fill="#a06f22" />
    <text transform="translate(12.500 28) skewY(-12)" textAnchor="middle" fontFamily="Roboto, sans-serif" fontWeight="900" fontSize="26" fill="#fff">5</text>
  </svg>
);
const TASKS = [
  [<RegistryIcon />], [<TreeIcon />], [<CodeIcon />, "mark"], [<StoreIcon />], [<MetaIcon />], [<EditorIcon />],
  [<FoxIcon />], [<Logo size={48} />, "active"], [<FolderIcon />], [<FiveIcon />, "mark"],
];

export default function App() {
  return (
    <Desktop>
      <GlobalStyle />
      <TitleBar>
        <AppBadge viewBox="0 0 48 48"><Logo size={48} /></AppBadge>
        <TitleText>5284139 - ICMarketsSC-MT5 - Hedge - Raw Trading Ltd - [XAUUSD,M15]</TitleText>
        <Push />
        <WindowButtons $gap={72}>
          <svg width="20" height="20"><path d="M0 10h20" stroke="#fff" strokeWidth="2" /></svg>
          <RestoreIcon s={20} c="#fff" />
          <svg width="20" height="20"><path d="M0 0l20 20M20 0L0 20" stroke="#fff" strokeWidth="1.800" /></svg>
        </WindowButtons>
      </TitleBar>
      <MenuBar>
        <Candles w={25} h={33} />
        <MenuItems>
          {["File", "View", "Insert", "Charts", "Tools", "Window", "Help"].map((m) => <span key={m}>{m}</span>)}
        </MenuItems>
        <Push />
        <WindowButtons $gap={22}>
          <svg width="16" height="16"><path d="M0 8h16" stroke="#a3a3a3" strokeWidth="2" /></svg>
          <RestoreIcon s={16} c="#a3a3a3" />
          <svg width="16" height="16"><path d="M0 0l16 16M16 0L0 16" stroke="#a3a3a3" strokeWidth="1.800" /></svg>
        </WindowButtons>
      </MenuBar>
      <ToolStrip />
      <Workspace>
        <Dock $w={405} $pad="4px 8px 6px 8px">
          <DockHeader><DockTitle $w={361}>Navigator</DockTitle><CloseX /></DockHeader>
          <List>
            {INDICATORS.map((n, i) => (
              <Row key={n} $shade={i % 2} $selected={n === "SCHR_Wave"}>
                <RowName><IconCell $w={37}><IndicatorIcon /></IconCell>{n}</RowName>
              </Row>
            ))}
          </List>
          <NavTabs>
            <NavTab $w={141} $pl={22}>Common</NavTab>
            <NavTab $w={135} $pl={19} $active>Favorites</NavTab>
            <NavTab $w={112} $pl={0} />
          </NavTabs>
        </Dock>
        <Center>
          <PriceChart />
          <ChartTabs>
            {TABS.map(([t, w, a], i) => <ChartTab key={i} $w={w} $active={a}>{t}</ChartTab>)}
            <Push />
            <TabArrows>
              <svg width="8" height="13"><path d="M8 0v13L0 6.500z" fill="#b0b0b0" /></svg>
              <svg width="8" height="13"><path d="M0 0v13l8-6.500z" fill="#b0b0b0" /></svg>
            </TabArrows>
          </ChartTabs>
        </Center>
        <Dock $w={386} $pad="4px 7px 7px 9px">
          <DockHeader><DockTitle $w={341}>Data Window</DockTitle><CloseX /></DockHeader>
          <List>
            {DATA.map(([n, v, icon], i) => (
              <Row key={n} $shade={i % 2}>
                <RowName $w={198}>
                  <IconCell $w={37}>
                    {icon === "chart" && <LineChartIcon s={30} />}
                    {icon === "wave" && <IndicatorIcon />}
                  </IconCell>
                  {n}
                </RowName>
                <RowValue>{v}</RowValue>
              </Row>
            ))}
          </List>
        </Dock>
      </Workspace>
      <StatusBar>
        <StatusCell $w={1963} $first $ls={0.2}>For Help, press F1</StatusCell>
        <StatusCell $w={267}>Default</StatusCell>
        <StatusCell $w={200}>2016.06.22 02:00</StatusCell>
        <StatusCell $w={142}>O: 1268.64</StatusCell>
        <StatusCell $w={141}>H: 1270.74</StatusCell>
        <StatusCell $w={135}>L: 1267.81</StatusCell>
        <StatusCell $w={139}>C: 1269.06</StatusCell>
        <StatusCell $w={134} />
        <StatusCell $w={236}>
          <Svg w={30} h={24} c={GREEN} sw={2.8}><path d="M5 24v-6M11 24V14M17 24V10M23 24V6M29 24V1" /></Svg>
          126.79 ms
        </StatusCell>
      </StatusBar>
      <Taskbar>
        <svg width="46" height="46" viewBox="0 0 46 46">
          <defs><linearGradient id="win" x1="0" y1="0" x2="1" y2="1"><stop offset="0" stopColor="#92dcfc" /><stop offset="1" stopColor="#3a93f5" /></linearGradient></defs>
          <path d="M2 0h20v22H0V2a2 2 0 012-2zM24 0h20a2 2 0 012 2v20H24zM0 24h22v22H2a2 2 0 01-2-2zM24 24h22v20a2 2 0 01-2 2H24z" fill="url(#win)" />
        </svg>
        <SearchBox>
          <svg width="30" height="30" viewBox="0 0 30 30" fill="none" stroke="#e2e9e4" strokeWidth="3.200"><circle cx="13" cy="13" r="11" /><path d="M21 21l8 8" /></svg>
          Search
        </SearchBox>
        {TASKS.map(([icon, state], i) => (
          <TaskSlot key={i} $active={state === "active"}>
            {icon}
            {state && <TaskMark $active={state === "active"} />}
          </TaskSlot>
        ))}
        <Push />
        <Tray>
          <svg width="22" height="13" fill="none" stroke="#fff" strokeWidth="2.500"><path d="M1 12L11 2l10 10" /></svg>
          <Language>ENG</Language>
          <svg width="34" height="32" viewBox="0 0 34 32" fill="none" stroke="#fff" strokeWidth="2.200">
            <path d="M21 1H4a3 3 0 00-3 3v16a3 3 0 003 3h20M10 23v7M18 23v7M6 30.500h17M29 13v18" />
            <rect x="25" y="1.500" width="8" height="12" rx="3" /><path d="M25 5.500h8" />
          </svg>
          <Speaker width="33" height="28" viewBox="0 0 33 28" fill="none" stroke="#fff" strokeWidth="2.200">
            <path d="M1 10v8h5l8 7V3l-8 7zM18 10q3 4 0 8M22 6q6 8 0 16M27 2q9 12 0 24" />
          </Speaker>
          <Clock>6:12 PM{"\n"}11/6/2024</Clock>
          <Bell width="28" height="30" viewBox="0 0 28 30" fill="none" stroke="#fff" strokeWidth="2.300">
            <path d="M4 17v-6a10 9.500 0 0120 0v6l2.500 6h-25zM10 24a4 4 0 008 0" strokeLinejoin="round" />
          </Bell>
        </Tray>
      </Taskbar>
    </Desktop>
  );
}
